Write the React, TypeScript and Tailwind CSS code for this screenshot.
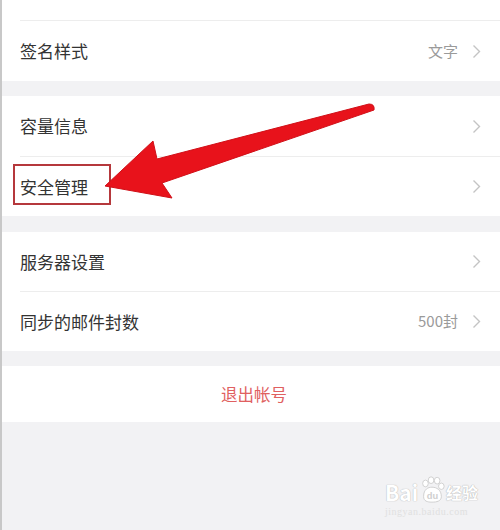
const Chevron = () => (
  <svg width="9" height="15" viewBox="0 0 9 15" className="shrink-0">
    <path d="M1.5 1.5 L7.5 7.5 L1.5 13.5" fill="none" stroke="#c4c4c4" strokeWidth="1.4" />
  </svg>
);

type RowProps = { label: string; value?: string; h?: string };

const Row = ({ label, value, h = "h-[60px]" }: RowProps) => (
  <div className={`flex items-center justify-between pl-[18px] pr-[19px] bg-white ${h}`}>
    <span className="text-[17px] text-[#333]">{label}</span>
    <div className="flex items-center gap-[14px]">
      {value && <span className="text-[15px] text-[#9a9a9a]">{value}</span>}
      <Chevron />
    </div>
  </div>
);

const Divider = () => (
  <div className="bg-white pl-[18px]">
    <div className="h-px bg-[#ededed]" />
  </div>
);

const Watermark = () => (
  <div className="absolute left-[383px] top-[476px] flex flex-col items-start gap-[2px] select-none">
    <div className="flex items-end">
      <span
        className="text-[21px] leading-[24px] font-bold text-white"
        style={{ textShadow: "0 0 1px #bdbdbd, 0 0 1px #bdbdbd" }}
      >
        Bai
      </span>
      <svg width="28" height="28" viewBox="0 0 30 30" className="shrink-0">
        <g fill="#fff" stroke="#c4c4c4" strokeWidth="0.8">
          <ellipse cx="8" cy="8" rx="3" ry="3.6" />
          <ellipse cx="14" cy="4.5" rx="3" ry="3.6" />
          <ellipse cx="20.5" cy="5" rx="3" ry="3.6" />
          <ellipse cx="25" cy="11" rx="3" ry="3.4" />
          <path d="M6 22 C6 14 11 12 15 12 C20 12 25 15 25 22 C25 27 20 28 15 28 C10 28 6 27 6 22 Z" />
        </g>
        <text x="15.5" y="25" textAnchor="middle" fontSize="10" fontWeight="bold" fill="#cfcfcf" fontFamily="Liberation Sans, sans-serif">
          du
        </text>
      </svg>
      <span
        className="text-[16px] leading-[24px] font-bold text-white"
        style={{ textShadow: "0 0 1px #b5b5b5, 0 0 1px #b5b5b5" }}
      >
        经验
      </span>
    </div>
    <span className="text-[10px] leading-[12px] text-[#e0e0e0] tracking-[0.5px]" style={{ fontFamily: "'Liberation Serif', serif" }}>
      jingyan.baidu.com
    </span>
  </div>
);

export default function App() {
  return (
    <div
      className="relative w-[500px] h-[530px] overflow-hidden bg-[#f2f2f4] border-l-2 border-[#c8c8c8]"
      style={{ fontFamily: "'Noto Sans CJK SC', 'Noto Sans', sans-serif" }}
    >
      <div className="h-[20px] bg-white" />
      <Divider />
      <Row label="签名样式" value="文字" />

      <div className="h-[15px]" />
      <Row label="容量信息" />
      <Divider />
      <Row label="安全管理" h="h-[59px]" />

      <div className="h-[16px]" />
      <Row label="服务器设置" h="h-[59px]" />
      <Divider />
      <Row label="同步的邮件封数" value="500封" h="h-[59px]" />

      <div className="h-[15px]" />
      <div className="h-[56px] bg-white flex items-center justify-center">
        <span className="text-[16.5px] text-[#e06060] pl-[6px]">退出帐号</span>
      </div>

      {/* highlight box */}
      <div className="absolute left-[11px] top-[164px] w-[98px] h-[41px] border-2 border-[#b5383c]" />

      {/* arrow annotation */}
      <svg className="absolute -left-[2px] top-0 pointer-events-none" width="500" height="530" viewBox="0 0 500 530">
        <path
          d="M105 186 L153 141 L157 159 L369 104 Q375 104 374 110 L162 183 L172 198 Z"
          fill="#e8121b"
          stroke="#d01018"
          strokeWidth="1"
          strokeLinejoin="round"
        />
      </svg>

      <Watermark />
    </div>
  );
}
